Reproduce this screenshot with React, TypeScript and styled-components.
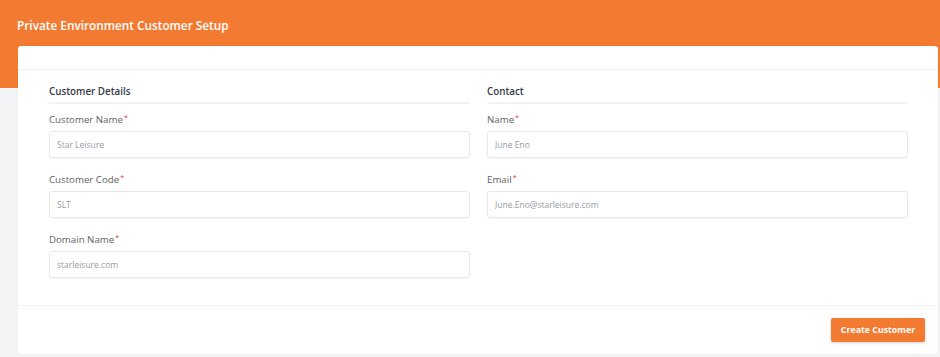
import { createGlobalStyle, styled } from "styled-components";

const GlobalStyle = createGlobalStyle`
    * {
        box-sizing: border-box;
    }
    body {
        margin: 0;
        font-family: "Open Sans", "Noto Sans", sans-serif;
        background: #f3f4f6;
    }
`;

const Page = styled.div`
    min-height: 357px;
    background: linear-gradient(to bottom, #f37a31 0, #f37a31 88px, #f3f4f6 88px);
    padding: 0 2px 3px 18px;
`;

const TitleBar = styled.div`
    height: 46px;
    display: flex;
    align-items: center;
    margin-left: -1px;
    padding-top: 3px;
`;

const Title = styled.h1`
    margin: 0;
    font-size: 11.8px;
    font-weight: 600;
    color: #ffffff;
`;

const Card = styled.div`
    background: #ffffff;
    border-radius: 3px;
    box-shadow: 0 0 2px rgba(0, 0, 0, 0.06);
`;

const CardTop = styled.div`
    height: 24px;
    border-bottom: 1px solid #f1f1f1;
`;

const CardBody = styled.div`
    display: grid;
    grid-template-columns: 1fr 1fr;
    column-gap: 17px;
    padding: 15px 30px 27px 31px;
    border-bottom: 1px solid #f1f1f1;
`;

const Column = styled.div`
    display: flex;
    flex-direction: column;
`;

const SectionTitle = styled.div`
    font-size: 9.8px;
    line-height: 14px;
    font-weight: 600;
    color: #343a46;
    padding-bottom: 3px;
    border-bottom: 2px solid #f2f2f2;
`;

const Field = styled.div<{ $first?: boolean }>`
    display: flex;
    flex-direction: column;
    margin-top: ${(p) => (p.$first ? "9px" : "15px")};
`;

const Label = styled.label`
    font-size: 9.7px;
    line-height: 14px;
    color: #626262;
    margin-bottom: 4px;
`;

const Required = styled.sup`
    color: #e0403a;
    font-size: 7px;
    vertical-align: top;
    position: relative;
    top: -2px;
    margin-left: 1px;
`;

const Input = styled.input`
    height: 27px;
    border: 1px solid #e8e8e8;
    border-radius: 3px;
    padding: 0 7px;
    font-family: inherit;
    font-size: 8.5px;
    color: #555;
    background: #fff;
    box-shadow: 0 1px 1px rgba(0, 0, 0, 0.03);
    outline: none;

    &::placeholder {
        color: #979da6;
    }
`;

const CardFooter = styled.div`
    display: flex;
    justify-content: flex-end;
    padding: 12px 13px 12px 0;
`;

const Button = styled.button`
    height: 24px;
    width: 94px;
    padding: 0;
    border: none;
    border-radius: 2px;
    background: #f37a31;
    color: #ffffff;
    font-family: inherit;
    font-size: 8.8px;
    font-weight: 700;
    box-shadow: 0 1px 3px rgba(0, 0, 0, 0.18);
    cursor: pointer;
`;

type FieldDef = { label: string; placeholder: string };

const customerFields: FieldDef[] = [
    { label: "Customer Name", placeholder: "Star Leisure" },
    { label: "Customer Code", placeholder: "SLT" },
    { label: "Domain Name", placeholder: "starleisure.com" },
];

const contactFields: FieldDef[] = [
    { label: "Name", placeholder: "June Eno" },
    { label: "Email", placeholder: "June.Eno@starleisure.com" },
];

const renderFields = (fields: FieldDef[]) =>
    fields.map((f, i) => (
        <Field key={f.label} $first={i === 0}>
            <Label>
                {f.label}
                <Required>*</Required>
            </Label>
            <Input placeholder={f.placeholder} />
        </Field>
    ));

const App = () => {
    return (
        <>
            <GlobalStyle />
            <Page>
                <TitleBar>
                    <Title>Private Environment Customer Setup</Title>
                </TitleBar>
                <Card>
                    <CardTop />
                    <CardBody>
                        <Column>
                            <SectionTitle>Customer Details</SectionTitle>
                            {renderFields(customerFields)}
                        </Column>
                        <Column>
                            <SectionTitle>Contact</SectionTitle>
                            {renderFields(contactFields)}
                        </Column>
                    </CardBody>
                    <CardFooter>
                        <Button>Create Customer</Button>
                    </CardFooter>
                </Card>
            </Page>
        </>
    );
};

export default App;
